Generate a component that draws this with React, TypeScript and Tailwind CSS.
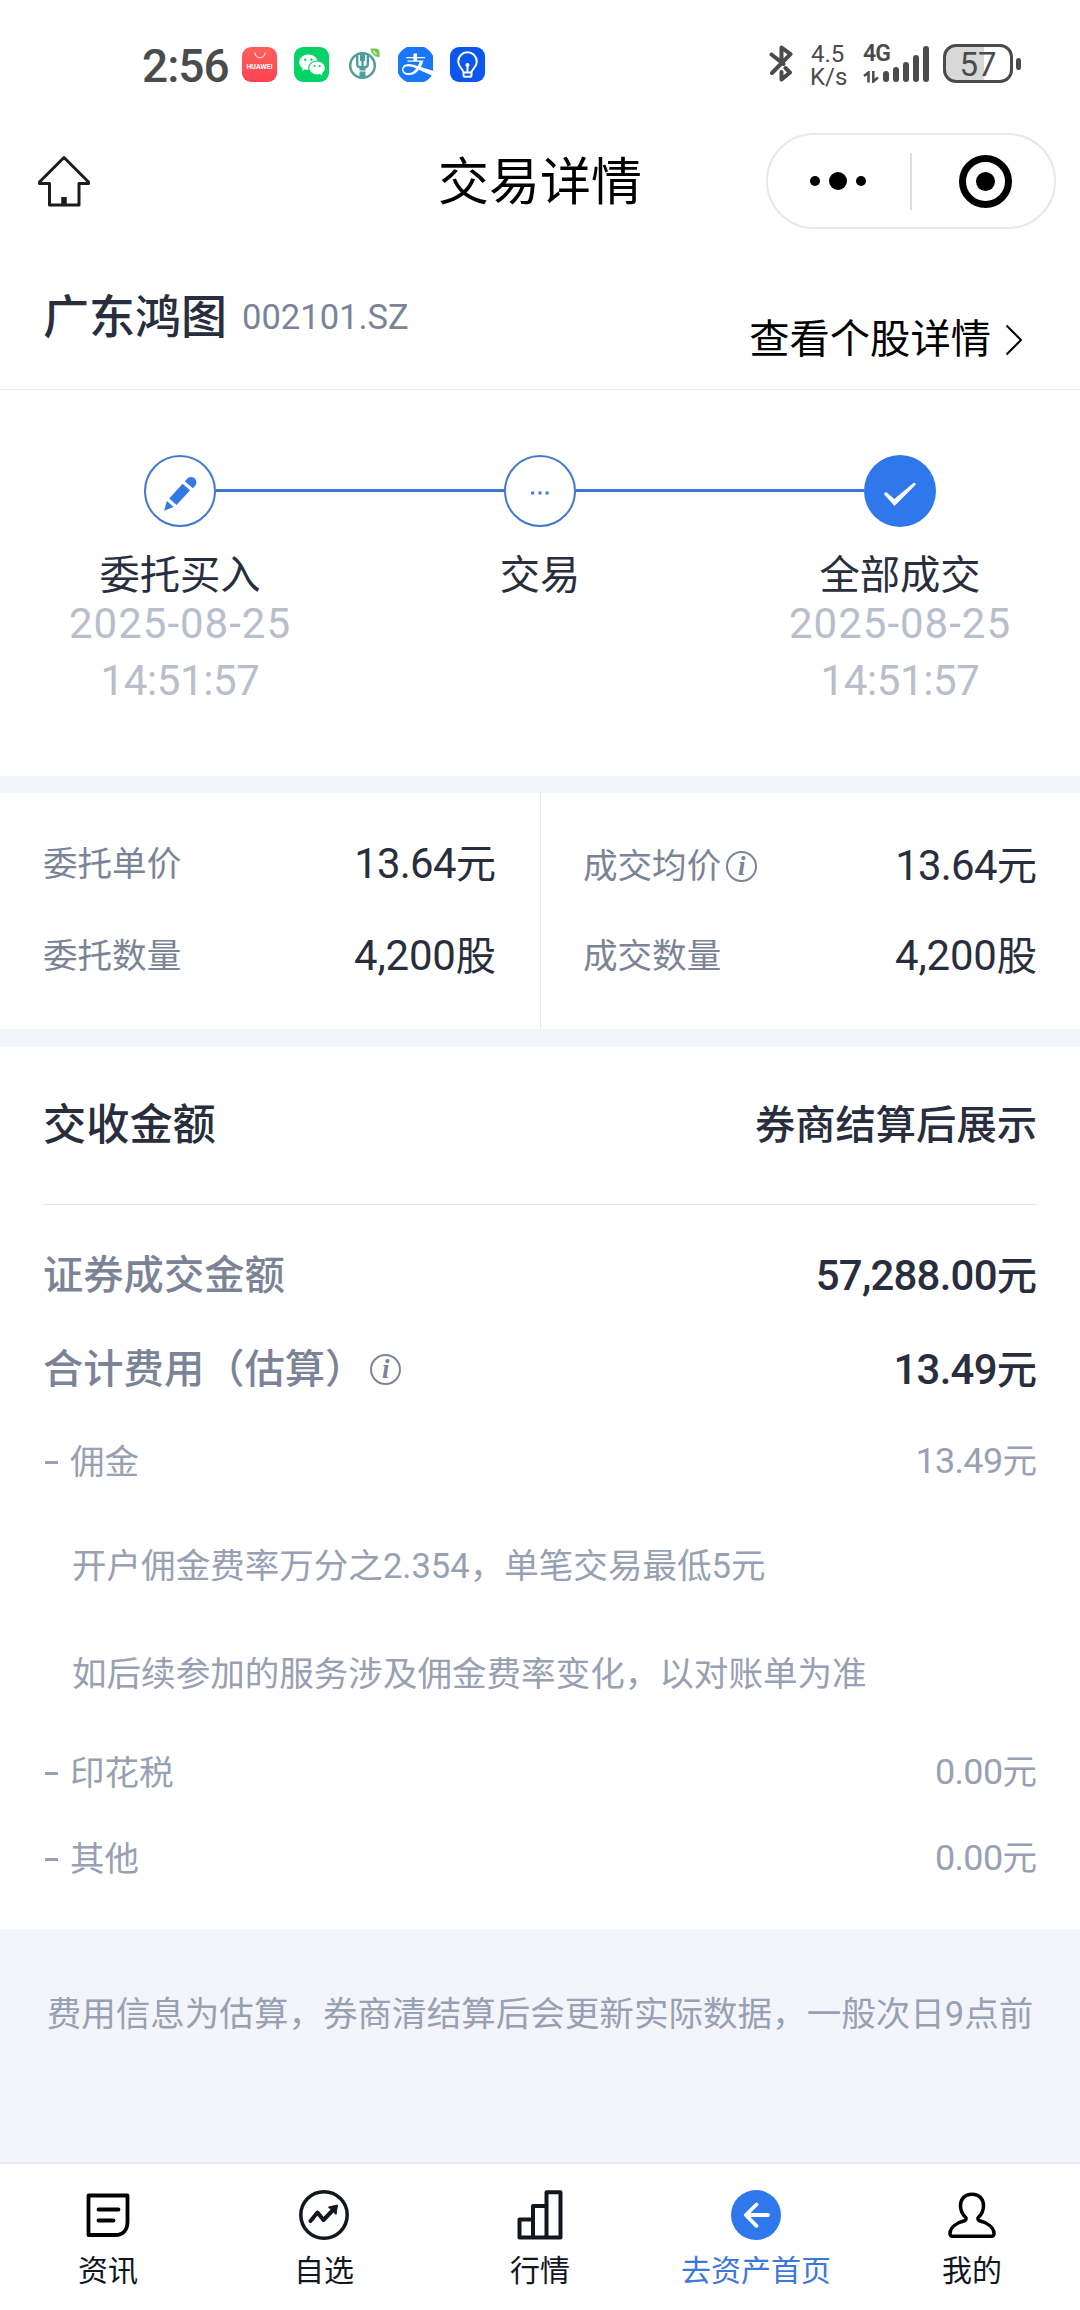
import type { ReactNode } from "react";
import { RiAlipayFill, RiWechatFill } from "react-icons/ri";

interface Step {
  label: string;
  date?: string;
  time?: string;
  icon: ReactNode;
  done?: boolean;
}

interface Tab {
  label: string;
  icon: ReactNode;
  active?: boolean;
}

function InfoIcon() {
  return (
    <div className="w-[31px] h-[31px] shrink-0 rounded-full border-2 border-[#7b8497] flex items-center justify-center text-[27px] leading-[27px] font-bold italic text-[#7b8497] [font-family:'Liberation_Serif',serif]">
      i
    </div>
  );
}

function PencilIcon() {
  return (
    <svg className="w-10 h-10 mt-[5px]" viewBox="0 0 36 36" fill="#3478e6">
      <path d="M24.500 4.200a4.800 4.800 0 0 1 7.300 6.200l-2.200 2.400-7.300-6.300z" />
      <path d="M20.300 8.700l6.800 6-12.200 13.300-6.600-6z" />
      <path d="M6.200 24.200l6 5.500-8.500 3.400z" />
    </svg>
  );
}

const steps: Step[] = [
  { label: "委托买入", date: "2025-08-25", time: "14:51:57", icon: <PencilIcon /> },
  {
    label: "交易",
    icon: (
      <svg className="w-5 h-1 mt-1" viewBox="0 0 20 4" fill="#4079d4">
        <rect x="1.200" y="0.500" width="3" height="3" />
        <rect x="8.500" y="0.500" width="3" height="3" />
        <rect x="15.600" y="0.500" width="3" height="3" />
      </svg>
    ),
  },
  {
    label: "全部成交",
    date: "2025-08-25",
    time: "14:51:57",
    done: true,
    icon: (
      <svg className="w-9 h-9 mt-px" viewBox="0 0 36 36" fill="white">
        <path d="M2 20.200q.8-2.600 2.800-1.700L12.300 25 31.800 8.800q1.800-.3 2 1.600L12.500 32z" />
      </svg>
    ),
  },
];

const tabs: Tab[] = [
  {
    label: "资讯",
    icon: (
      <svg className="w-[50px] h-[50px]" viewBox="0 0 50 50" fill="none" stroke="#000" strokeWidth="3.800" strokeLinecap="round" strokeLinejoin="round">
        <path d="M5.500 5.500h39v26c0 8-4 13.500-12 13.500h-27z" />
        <path d="M15.500 19.500h20M15.500 30.500h15" />
      </svg>
    ),
  },
  {
    label: "自选",
    icon: (
      <svg className="w-[50px] h-[50px]" viewBox="0 0 50 50" fill="none" stroke="#12161f">
        <circle cx="25" cy="25" r="23.200" strokeWidth="3.500" />
        <path d="M11.500 31l7-8.500 6 7.500 9-9.500" strokeWidth="4" strokeLinecap="round" strokeLinejoin="round" />
        <path d="M38.500 15l-9 2 7.500 7.500z" fill="#12161f" strokeWidth="1" />
      </svg>
    ),
  },
  {
    label: "行情",
    icon: (
      <svg className="w-[50px] h-[50px]" viewBox="0 0 50 50" fill="none" stroke="#12161f" strokeWidth="4" strokeLinejoin="round">
        <path d="M4.500 29.500h13.500v18H4.500zM18 16h13.500v31.500H18zM31.500 2.300h14v45.200h-14z" />
      </svg>
    ),
  },
  {
    label: "去资产首页",
    active: true,
    icon: (
      <svg className="w-[50px] h-[50px]" viewBox="0 0 50 50" fill="none">
        <circle cx="25" cy="25" r="25" fill="#2f78ec" />
        <path d="M37 25H15M25.500 14.500L14.800 25l10.700 10.800" stroke="white" strokeWidth="3.800" strokeLinecap="round" strokeLinejoin="round" />
      </svg>
    ),
  },
  {
    label: "我的",
    icon: (
      <svg className="w-[50px] h-[50px]" viewBox="0 0 50 50" fill="none" stroke="#000" strokeWidth="3.500" strokeLinejoin="round">
        <path d="M25 4.200c7.500 0 11.500 5 11.500 11.500 0 5.500-2.500 9-5 11.500-1.200 1.500-.6 3 1 3.600 8 2 14 6.500 14.500 12.200.1 2-.8 3.300-2.500 3.300h-39c-1.700 0-2.600-1.300-2.500-3.300C3.500 37.300 9.500 32.800 17.500 30.800c1.600-.6 2.200-2.100 1-3.600-2.500-2.500-5-6-5-11.500C13.500 9.200 17.500 4.200 25 4.200z" />
      </svg>
    ),
  },
];

function StatusBar() {
  return (
    <div className="h-[120px] flex items-start text-[#4b4b4b]">
      <div className="ml-[142px] mt-[41px] w-[100px] h-[50px] leading-[50px] text-[46px] font-medium tracking-[-1px]">2:56</div>
      <div className="flex items-center gap-[17px] mt-[47px]">
        <div className="w-[35px] h-[35px] rounded-[9px] bg-gradient-to-b from-[#ff5f5c] to-[#fb4253] flex flex-col items-center text-white">
          <svg className="w-3 h-[7px] mt-[5px]" viewBox="0 0 12 7" fill="none" stroke="white" strokeWidth="1">
            <path d="M.8.500c.5 7 10 7 10.400 0" />
          </svg>
          <span className="text-[7px] leading-[9px] font-bold mt-[4px]">HUAWEI</span>
        </div>
        <div className="w-[35px] h-[35px] rounded-[9px] bg-[#06d267] flex items-center justify-center">
          <RiWechatFill className="w-[28px] h-[28px] text-white" />
        </div>
        <svg className="w-[35px] h-[35px]" viewBox="0 0 35 35" fill="none">
          <circle cx="16.500" cy="18.500" r="12.300" stroke="#4f9f9c" strokeWidth="2.500" />
          <path d="M16.500 5.500v26M11.200 8v9.500q0 3 5.300 3t5.300-3V8" stroke="#4f9f9c" strokeWidth="2.400" />
          <path d="M14 5h5v9h-5zM13.500 19h6v12h-6z" fill="#4f9f9c" />
          <path d="M13 24h7" stroke="white" strokeWidth="1" />
          <path d="M24.500 1.500h5q4 0 4 4v5q-8-1-9-9z" fill="#6fca4b" />
          <path d="M27.500 4l3 3.500" stroke="#d6f3c8" strokeWidth="1.500" />
        </svg>
        <div className="w-[35px] h-[35px] rounded-[9px] overflow-hidden bg-white flex items-center justify-center">
          <RiAlipayFill className="w-[47px] h-[47px] shrink-0 text-[#1977fb]" />
        </div>
        <svg className="w-[35px] h-[35px]" viewBox="0 0 35 35" fill="none" stroke="white" strokeWidth="2">
          <rect width="35" height="35" rx="9" fill="#0b57ee" stroke="none" />
          <path d="M13.500 25.500c0-3-5.300-5-5.300-11a9.300 9.300 0 0 1 18.600 0c0 6-5.300 8-5.300 11zM13.500 25.500v3q0 1.300 1.300 1.300h5.400q1.300 0 1.300-1.300v-3" />
          <circle cx="17.500" cy="18" r="2" fill="white" stroke="none" />
          <path d="M17.500 18v7.500" strokeWidth="2" />
        </svg>
      </div>
      <div className="ml-auto mr-[59px] mt-[43px] flex items-start">
        <svg className="w-[24px] h-[40px]" viewBox="0 0 24 40" fill="none" stroke="#4b4b4b" strokeWidth="4" strokeLinejoin="round" strokeLinecap="round">
          <path d="M2.500 11.500l12 9.500M12.500 16V4.500l9 6.700L3 30M16.500 25l4.500 4.500-8.500 7V29" />
        </svg>
        <div className="ml-[17px] w-[41px] text-[24px] leading-[22px]">
          <div className="ml-[1px]">4.5</div>
          <div className="mt-px">K/s</div>
        </div>
        <div className="ml-[12px] w-[18px] h-[40px]">
          <div className="text-[23px] leading-[22px] font-semibold tracking-[-1px]">4G</div>
          <svg className="w-[17px] h-[12px] mt-[6px]" viewBox="0 0 17 12" fill="none" stroke="#4b4b4b" strokeWidth="2.500">
            <path d="M1 5l4.500-3.500V11.500M10.300 0v10.500L15 6.500" />
          </svg>
        </div>
        <div className="ml-[2px] h-[39px] flex items-end gap-[4px]">
          <div className="w-[6px] h-[11px] rounded-full bg-[#4b4b4b]"></div>
          <div className="w-[6px] h-[15px] rounded-full bg-[#4b4b4b]"></div>
          <div className="w-[6px] h-[20px] rounded-full bg-[#4b4b4b]"></div>
          <div className="w-[6px] h-[27px] rounded-full bg-[#4b4b4b]"></div>
          <div className="w-[6px] h-[36px] rounded-full bg-[#4b4b4b]"></div>
        </div>
        <div className="ml-[14px] mt-[1px] w-[70px] h-[39px] rounded-[13px] border-[3px] border-[#4b4b4b] bg-gradient-to-r from-[#d8d8d8] from-60% to-white to-60% text-center text-[33px] leading-[35px]">
          57
        </div>
        <div className="ml-[3px] mt-[15px] w-[5px] h-[12px] rounded-full bg-[#4b4b4b]"></div>
      </div>
    </div>
  );
}

function NavBar() {
  return (
    <div className="h-[122px] grid grid-cols-[1fr_auto_1fr] items-center">
      <svg className="ml-[37px] w-[54px] h-[52px]" viewBox="0 0 54 52" fill="none" stroke="#1c1c1c" strokeWidth="3" strokeLinejoin="round" strokeLinecap="round">
        <path d="M27 2.500L2.500 27v1.500h10V50h29.500V28.500h9.500V27z" />
        <path d="M27 42v7" strokeWidth="5.500" strokeLinecap="butt" />
      </svg>
      <h1 className="pt-[4px] text-[51px] leading-[60px] text-black">交易详情</h1>
      <div className="justify-self-end mr-[24px] w-[290px] h-[96px] rounded-full border-2 border-[#e8e8e8] flex items-center">
        <div className="w-[142px] pr-[2px] flex items-center justify-center gap-[9px]">
          <div className="w-[10px] h-[10px] rounded-full bg-black"></div>
          <div className="w-[18px] h-[18px] rounded-full bg-black"></div>
          <div className="w-[10px] h-[10px] rounded-full bg-black"></div>
        </div>
        <div className="w-[2px] h-[57px] bg-[#dedede]"></div>
        <div className="ml-[47px] w-[53px] h-[53px] rounded-full border-[7px] border-black flex items-center justify-center">
          <div className="w-[19px] h-[19px] rounded-full bg-black"></div>
        </div>
      </div>
    </div>
  );
}

function Steps() {
  return (
    <div className="h-[386px] pt-[65px] grid grid-cols-3">
      {steps.map((step, i) => (
        <div key={i} className="text-center text-[40.3px]">
          <div className="flex items-center">
            <div className={i === 0 ? "flex-1" : "flex-1 h-[3px] mb-[1px] bg-[#3f78d3]"}></div>
            <div
              className={
                step.done
                  ? "w-[72px] h-[72px] rounded-full bg-[#2f78ec] flex items-center justify-center"
                  : "w-[72px] h-[72px] rounded-full border-2 border-[#4079cf] flex items-center justify-center"
              }
            >
              {step.icon}
            </div>
            <div className={i === steps.length - 1 ? "flex-1" : "flex-1 h-[3px] mb-[1px] bg-[#3f78d3]"}></div>
          </div>
          <p className="mt-[28px] leading-[41px] text-[#282e3d]">{step.label}</p>
          <p className="-mt-px leading-[57px] text-[#b8becb] text-[42px] tracking-[1px]">{step.date}</p>
          <p className="leading-[57px] text-[#b8becb] text-[42px] tracking-[-0.4px]">{step.time}</p>
        </div>
      ))}
    </div>
  );
}

function QuoteRow({ label, value, unit, info }: { label: string; value: string; unit: string; info?: boolean }) {
  return (
    <div className={info ? "h-[92px] pt-[6px] flex items-center justify-between" : "h-[92px] pt-[2px] flex items-center justify-between"}>
      <div className="flex items-center text-[34.56px] text-[#7b8497]">
        {label}
        {info && (
          <div className="ml-[5px]">
            <InfoIcon />
          </div>
        )}
      </div>
      <Amount value={value} unit={unit} className="text-[40.3px] text-[#282e3d]" />
    </div>
  );
}

// decimals are set a little tighter than whole numbers
function Amount({ value, unit, className }: { value: string; unit: string; className: string }) {
  return (
    <div className={className}>
      <span className={value.includes(".") ? "text-[1.040em] tracking-[-0.018em]" : "text-[1.040em] tracking-[-0.004em]"}>{value}</span>
      {unit}
    </div>
  );
}

function FeeRow({ label, value }: { label: string; value: string }) {
  return (
    <div className="h-[88px] pt-[2px] flex items-center justify-between text-[34.56px] text-[#98a0b3]">
      <div className="flex items-center">
        <div className="ml-[2px] mr-[12px] w-[13px] h-[3px] bg-[#98a0b3]"></div>
        {label}
      </div>
      <Amount value={value} unit="元" className="" />
    </div>
  );
}

export default function App() {
  return (
    <div className="w-[1080px] h-[2310px] flex flex-col bg-white overflow-hidden leading-none whitespace-nowrap [font-family:Roboto,'Noto_Sans_CJK_SC',sans-serif]">
      <StatusBar />
      <NavBar />

      <div className="h-[148px] px-[43px] flex justify-between border-b border-[#e8e8ea]">
        <div className="pt-[43px] h-[107px] flex items-center">
          <span className="text-[46px] font-medium text-[#282e3d]">广东鸿图</span>
          <span className="ml-[15px] text-[34.56px] text-[#7b8497]">002101.SZ</span>
        </div>
        <div className="pt-[66px] h-[130px] mr-[14px] flex items-center text-[40.3px] text-black">
          查看个股详情
          <svg className="ml-[14px] w-[18px] h-[32px]" viewBox="0 0 18 32" fill="none" stroke="black" strokeWidth="2">
            <path d="M1.500 1.500L16 16 1.500 30.500" />
          </svg>
        </div>
      </div>

      <Steps />

      <div className="h-[17px] bg-[#f4f5fa]"></div>
      <div className="h-[236px] grid grid-cols-2">
        <div className="pt-6 pl-[43px] pr-[44px]">
          <QuoteRow label="委托单价" value="13.64" unit="元" />
          <QuoteRow label="委托数量" value="4,200" unit="股" />
        </div>
        <div className="pt-6 pl-[42px] pr-[43px] border-l border-[#e8e8ea]">
          <QuoteRow label="成交均价" value="13.64" unit="元" info />
          <QuoteRow label="成交数量" value="4,200" unit="股" />
        </div>
      </div>
      <div className="h-[18px] bg-[#f4f5fa]"></div>

      <div className="h-[882px] px-[43px]">
        <div className="h-[158px] flex items-center justify-between border-b border-[#e8e8ea] font-medium text-[#282e3d]">
          <span className="text-[43.2px]">交收金额</span>
          <span className="pt-[2px] text-[40.3px]">券商结算后展示</span>
        </div>
        <div className="mt-[24px] h-[94px] flex items-center justify-between text-[40.3px] font-medium">
          <span className="text-[#7b8497]">证券成交金额</span>
          <Amount value="57,288.00" unit="元" className="text-[#282e3d]" />
        </div>
        <div className="h-[94px] flex items-center justify-between text-[40.3px] font-medium">
          <div className="flex items-center text-[#7b8497]">
            合计费用（估算）
            <div className="ml-[5px]">
              <InfoIcon />
            </div>
          </div>
          <Amount value="13.49" unit="元" className="text-[#282e3d]" />
        </div>
        <FeeRow label="佣金" value="13.49" />
        <div className="mt-[7px] pl-[29px] text-[34.56px] leading-[108px] text-[#98a0b3]">
          <p>开户佣金费率万分之2.354，单笔交易最低5元</p>
          <p>如后续参加的服务涉及佣金费率变化，以对账单为准</p>
        </div>
        <FeeRow label="印花税" value="0.00" />
        <div className="-mt-[2px]">
          <FeeRow label="其他" value="0.00" />
        </div>
      </div>

      <div className="h-[233px] bg-[#f4f5fa] text-center text-[34.56px] leading-[171px] text-[#98a0b3]">
        费用信息为估算，券商清结算后会更新实际数据，一般次日9点前
      </div>

      <div className="flex-1 border-t-2 border-[#e8e9ed] grid grid-cols-5 bg-white">
        {tabs.map((tab) => (
          <div key={tab.label} className="pt-[26px] flex flex-col items-center">
            {tab.icon}
            <span className={tab.active ? "mt-[11px] text-[30px] leading-[40px] text-[#3b78d8]" : "mt-[11px] text-[30px] leading-[40px] text-[#12161f]"}>
              {tab.label}
            </span>
          </div>
        ))}
      </div>
    </div>
  );
}
